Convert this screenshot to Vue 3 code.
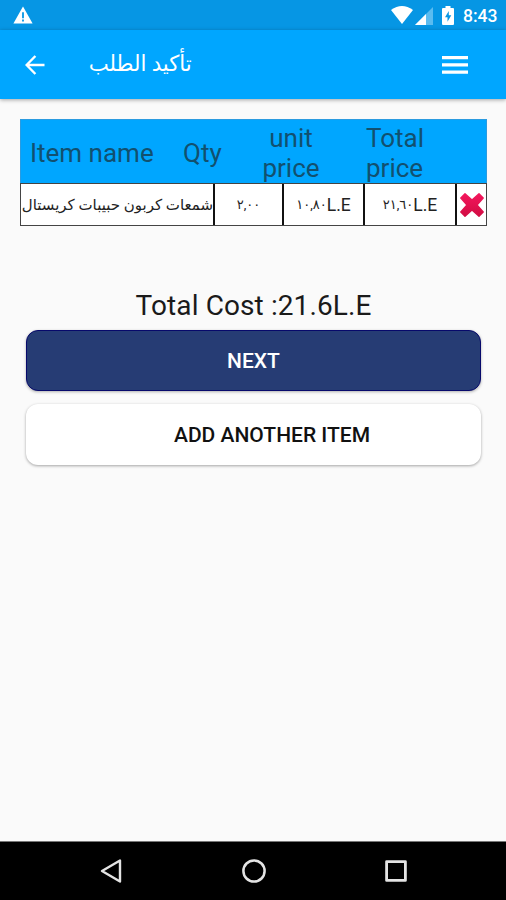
<script setup>
const items = [
  { name: 'شمعات كربون حبيبات كريستال', qty: '٢,٠٠', unit: '١٠,٨٠', total: '٢١,٦٠' }
]
</script>

<template>
  <div class="screen">
    <div class="status">
      <svg class="warn" width="20" height="18" viewBox="0 0 20 18">
        <path d="M10 0.5L19.6 17.5H0.4Z" fill="#fff" />
        <path d="M10 6.2v6M10 13.4v2" stroke="#0696e4" stroke-width="1.8" />
      </svg>
      <div class="status-right">
        <svg width="22" height="18" viewBox="0 0 22 18">
          <path d="M0 4Q11-4 22 4L11 18Z" fill="#fff" />
        </svg>
        <svg class="signal" width="18" height="18" viewBox="0 0 18 18">
          <path d="M18 0V18H0Z" fill="#5bbcf0" />
          <path d="M11 7V18H0Z" fill="#fff" />
        </svg>
        <svg class="battery" width="12" height="19" viewBox="0 0 12 19">
          <path d="M3.5 0h5v2H11a1 1 0 0 1 1 1V18a1 1 0 0 1-1 1H1a1 1 0 0 1-1-1V3a1 1 0 0 1 1-1H3.5Z" fill="#fff" />
          <path d="M6.8 5L3 11.2H5.5V15.7L9.3 9.3H6.8Z" fill="#0696e4" />
        </svg>
        <span class="clock">8:43</span>
      </div>
    </div>
    <header class="bar">
      <svg class="back" width="20" height="20" viewBox="0 0 20 20" fill="none" stroke="#fff" stroke-width="2.4">
        <path d="M19.5 10H2M10.4 1L1.6 10L10.4 19" />
      </svg>
      <h1 class="title" dir="rtl"><span>تأكيد الطلب</span></h1>
      <svg class="menu" width="26" height="18" viewBox="0 0 26 18" fill="#fff">
        <path d="M0 0h26v3.2H0ZM0 7.3h26v3.2H0ZM0 14.6h26v3.2H0Z" />
      </svg>
    </header>

    <main>
      <div class="table">
        <div class="head">
          <span class="h-name">Item name</span>
          <span class="h-qty">Qty</span>
          <span class="h-unit">unit<br>price</span>
          <span class="h-total">Total<br>price</span>
        </div>
        <div v-for="item in items" :key="item.name" class="row">
          <div class="cell name" dir="rtl"><span>{{ item.name }}</span></div>
          <div class="cell"><span class="num">{{ item.qty }}</span></div>
          <div class="cell"><span class="num">{{ item.unit }}</span><span>L.E</span></div>
          <div class="cell"><span class="num">{{ item.total }}</span><span>L.E</span></div>
          <div class="cell">
            <svg width="24" height="24" viewBox="0 0 24 24">
              <defs>
                <linearGradient id="cross" x1="0" y1="0" x2="0" y2="1">
                  <stop offset="0" stop-color="#f3165c" />
                  <stop offset="1" stop-color="#d20c43" />
                </linearGradient>
              </defs>
              <path d="M5 0.8L12 7L19 0.8L23.2 5L17 12L23.2 19L19 23.2L12 17L5 23.2L0.8 19L7 12L0.8 5Z" fill="url(#cross)" stroke="url(#cross)" stroke-width="1.4" stroke-linejoin="round" />
            </svg>
          </div>
        </div>
      </div>
      <p class="cost">Total Cost :21.6L.E</p>
      <button class="btn next">NEXT</button>
      <button class="btn add">ADD ANOTHER ITEM</button>
    </main>

    <nav class="nav">
      <svg width="22" height="24" viewBox="0 0 22 24" fill="none" stroke="#e4e4e4" stroke-width="2.4" stroke-linejoin="round">
        <path d="M20 1.5V22.5L2 12Z" />
      </svg>
      <svg width="24" height="24" viewBox="0 0 24 24" fill="none" stroke="#e4e4e4" stroke-width="2.5">
        <circle cx="12" cy="12" r="10.6" />
      </svg>
      <svg width="22" height="22" viewBox="0 0 22 22" fill="none" stroke="#e4e4e4" stroke-width="2.8" stroke-linejoin="round">
        <rect x="1.6" y="1.6" width="18.8" height="18.8" />
      </svg>
    </nav>
  </div>
</template>

<style>
body { margin: 0; }
</style>

<style scoped>
.screen {
  width: 506px;
  height: 900px;
  display: flex;
  flex-direction: column;
  background: #fafafa;
  font-family: Roboto, "DejaVu Sans", sans-serif;
  overflow: hidden;
}
.status {
  height: 30px;
  box-sizing: border-box;
  background: #0696e4;
  display: flex;
  justify-content: space-between;
  padding: 6px 9px 0 13px;
}
.status-right { display: flex; align-items: flex-start; }
.signal { margin-left: 2px; margin-top: 1px; }
.battery { margin-left: 9px; }
.clock {
  width: 34px;
  margin-left: 9px;
  color: #fff;
  font-size: 17.5px;
  line-height: 20px;
  font-weight: 500;
  white-space: nowrap;
}
.bar {
  height: 69px;
  box-sizing: border-box;
  background: #00a6ff;
  box-shadow: 0 1px 4px rgba(0, 0, 0, 0.35);
  display: flex;
  align-items: center;
  padding: 0 38px 0 25px;
}
.title {
  margin: 0 auto 2px 44px;
  width: 103px;
  color: #fff;
  font-size: 22px;
  line-height: 30px;
  font-weight: 400;
  white-space: nowrap;
}
.title span { display: inline-block; transform: scaleX(0.965); transform-origin: right; }
main {
  flex: 1;
  display: flex;
  flex-direction: column;
  padding: 20px 19px 0 20px;
}
.table { width: 467px; }
.head {
  height: 64px;
  box-sizing: border-box;
  background: #00a6ff;
  border: 1px solid #2b9be0;
  border-bottom: 0;
  display: flex;
  align-items: center;
  color: #12506f;
  font-size: 26px;
  line-height: 30px;
  padding-top: 2px;
}
.head span { white-space: nowrap; }
.h-name { width: 153px; padding-left: 9px; box-sizing: border-box; }
.h-qty { width: 79px; padding-left: 9px; box-sizing: border-box; }
.h-unit { width: 76px; text-align: center; }
.h-total { margin-left: 37px; }
.row {
  height: 43px;
  box-sizing: border-box;
  display: grid;
  grid-template-columns: 194px 69px 81px 92px 1fr;
  background: #fff;
  border: 1px solid #444;
}
.cell {
  display: flex;
  align-items: center;
  justify-content: center;
  border-right: 2px solid #111;
  color: #222;
  font-size: 17.5px;
  line-height: 24px;
  white-space: nowrap;
}
.cell:last-child { border-right: 0; }
.name { justify-content: flex-start; font-size: 15px; }
.name span { display: inline-block; }
.num { font-size: 13px; }
.cost {
  margin: 62px 0 0;
  height: 36px;
  text-align: center;
  font-size: 28px;
  line-height: 36px;
  letter-spacing: 0.1px;
  color: #1a1a1a;
}
.btn {
  margin: 6px 6px 0;
  height: 61px;
  box-sizing: border-box;
  border: 0;
  border-radius: 12px;
  font-family: Roboto, sans-serif;
  font-size: 21px;
  font-weight: 500;
  padding: 0;
}
.next {
  background: #263c74;
  border: 1px solid #07096b;
  color: #fff;
  box-shadow: 0 1px 3px rgba(0, 0, 0, 0.3);
}
.add {
  margin-top: 13px;
  background: #fff;
  color: #111;
  padding-left: 37px;
  box-shadow: 0 1px 3px rgba(0, 0, 0, 0.35);
}
.nav {
  height: 59px;
  box-sizing: border-box;
  background: #000;
  border-top: 1px solid #777;
  display: flex;
  align-items: center;
  justify-content: space-between;
  padding: 0 99px 0 100px;
}
</style>
